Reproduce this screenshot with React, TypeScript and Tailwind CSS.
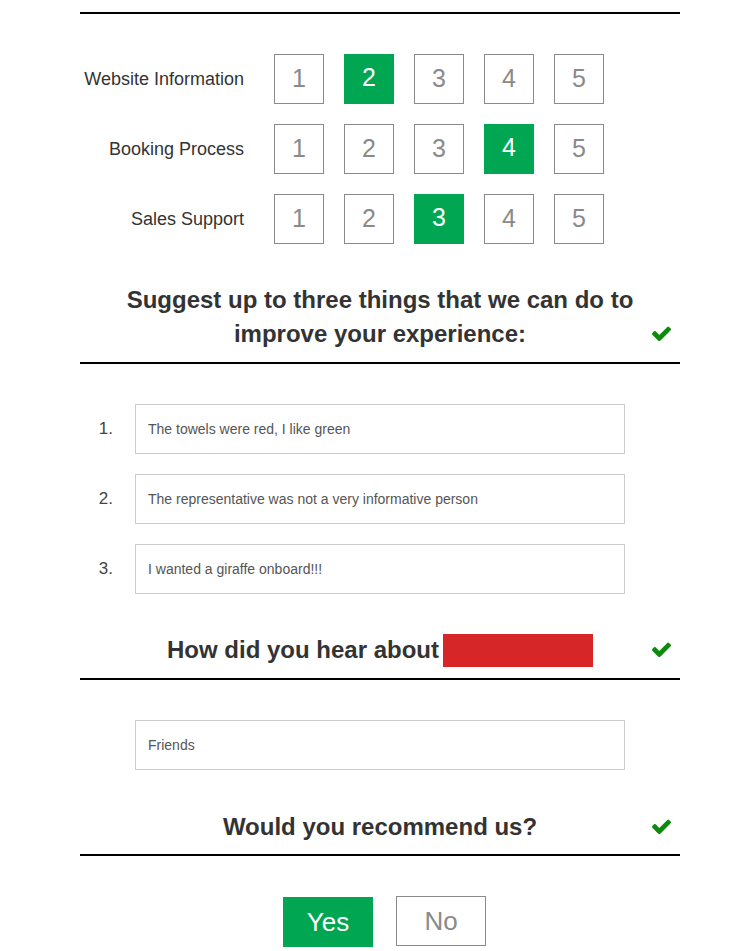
import React from "react";

const font = { fontFamily: '"Liberation Sans", Arial, sans-serif' };

function Check() {
  return (
    <svg width="19" height="15" viewBox="121 302 1550 1192" className="block">
      <path
        fill="#0b8a0b"
        d="M1671 566q0 40-28 68l-724 724-136 136q-28 28-68 28t-68-28l-136-136-362-362q-28-28-28-68t28-68l136-136q28-28 68-28t68 28l294 295 656-657q28-28 68-28t68 28l136 136q28 28 28 68z"
      />
    </svg>
  );
}

function RatingRow({ label, value }: { label: string; value: number }) {
  return (
    <div className="flex items-center h-[50px]">
      <div className="w-[164px] text-right text-[18px] text-[#333]">{label}</div>
      <div className="ml-[30px] flex gap-[20px]">
        {[1, 2, 3, 4, 5].map((n) =>
          n === value ? (
            <div
              key={n}
              className="w-[50px] h-[50px] bg-[#00a651] text-white text-[25px] flex items-center justify-center pb-[2px]"
            >
              {n}
            </div>
          ) : (
            <div
              key={n}
              className="w-[50px] h-[50px] border border-[#8a8a8a] text-[#8a8a8a] text-[25px] flex items-center justify-center"
            >
              {n}
            </div>
          )
        )}
      </div>
    </div>
  );
}

function SectionHeading({
  children,
  checkTop,
  pb = "pb-[11px]",
}: {
  children: React.ReactNode;
  checkTop: string;
  pb?: string;
}) {
  return (
    <div className={`relative border-b-2 border-black ${pb}`}>
      <div className="text-center text-[24px] font-bold leading-[34px] text-[#333]">{children}</div>
      <div className={`absolute right-[9px] ${checkTop}`}>
        <Check />
      </div>
    </div>
  );
}

function TextRow({ num, text }: { num?: string; text: string }) {
  return (
    <div className="flex items-center h-[50px]">
      <div className="w-[33px] text-right text-[17px] text-[#444]">{num}</div>
      <div className="ml-[22px] w-[490px] h-[50px] border border-[#cccccc] flex items-center pl-[12px] text-[14px] text-[#555]">
        {text}
      </div>
    </div>
  );
}

export default function App() {
  return (
    <div className="bg-white min-h-[951px]" style={font}>
      <div className="ml-[80px] w-[600px] pt-[12px]">
        <div className="h-[2px] bg-black" />
        <div className="mt-[40px] flex flex-col gap-[20px]">
          <RatingRow label="Website Information" value={2} />
          <RatingRow label="Booking Process" value={4} />
          <RatingRow label="Sales Support" value={3} />
        </div>

        <div className="mt-[39px]">
          <SectionHeading checkTop="top-[43px]">
            Suggest up to three things that we can do to
            <br />
            improve your experience:
          </SectionHeading>
        </div>

        <div className="mt-[40px] flex flex-col gap-[20px]">
          <TextRow num="1." text="The towels were red, I like green" />
          <TextRow num="2." text="The representative was not a very informative person" />
          <TextRow num="3." text="I wanted a giraffe onboard!!!" />
        </div>

        <div className="mt-[39px]">
          <SectionHeading checkTop="top-[9px]">
            <span className="inline-flex items-center">
              How did you hear about
              <span className="inline-block ml-[4px] w-[150px] h-[33px] bg-[#d62628]" />
            </span>
          </SectionHeading>
        </div>

        <div className="mt-[40px]">
          <TextRow text="Friends" />
        </div>

        <div className="mt-[40px]">
          <SectionHeading checkTop="top-[9px]" pb="pb-[10px]">
            Would you recommend us?
          </SectionHeading>
        </div>

        <div className="mt-[40px] flex justify-center gap-[23px] pl-[9px]">
          <div className="w-[90px] h-[50px] mt-[1px] bg-[#00a651] text-white text-[26px] flex items-center justify-center">
            Yes
          </div>
          <div className="w-[90px] h-[50px] border border-[#8a8a8a] text-[#8a8a8a] text-[26px] flex items-center justify-center">
            No
          </div>
        </div>
      </div>
    </div>
  );
}
